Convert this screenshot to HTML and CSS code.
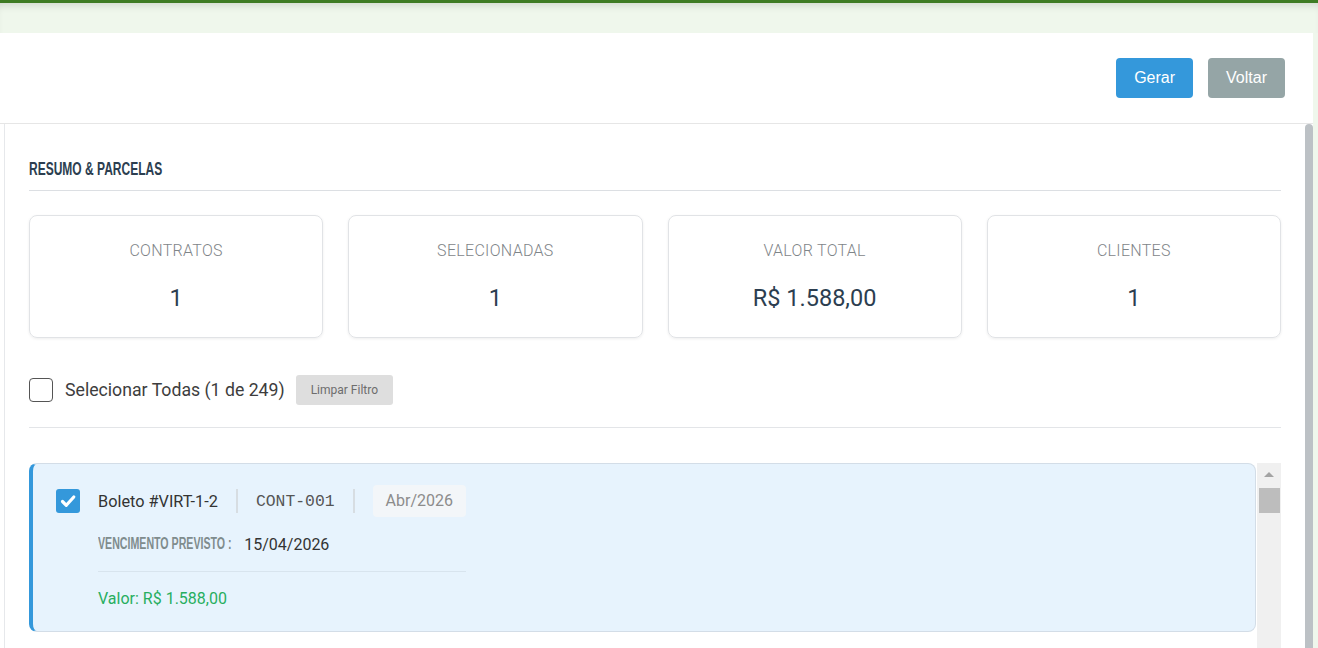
FILE: index.html
```html
<!DOCTYPE html>
<html lang="pt-BR">

<head>
    <meta charset="UTF-8">
    <meta name="viewport" content="width=device-width, initial-scale=1.0">
    <title>Gerar Boletos</title>
    <link rel="stylesheet" href="styles.css">
</head>

<body>
    <div class="topbar"></div>

    <div class="panel">
        <div class="panel-header">
            <button class="btn btn-primary">Gerar</button>
            <button class="btn btn-secondary">Voltar</button>
        </div>

        <div class="panel-body">
            <div class="content">
                <h3 class="section-title"><span>Resumo &amp; Parcelas</span></h3>

                <div class="summary">
                    <div class="summary-card">
                        <div class="summary-label">Contratos</div>
                        <div class="summary-value">1</div>
                    </div>
                    <div class="summary-card">
                        <div class="summary-label">Selecionadas</div>
                        <div class="summary-value">1</div>
                    </div>
                    <div class="summary-card">
                        <div class="summary-label">Valor Total</div>
                        <div class="summary-value">R$ 1.588,00</div>
                    </div>
                    <div class="summary-card">
                        <div class="summary-label">Clientes</div>
                        <div class="summary-value">1</div>
                    </div>
                </div>

                <div class="select-row">
                    <span class="checkbox"></span>
                    <span class="select-text">Selecionar Todas (1 de 249)</span>
                    <button class="btn-filter">Limpar Filtro</button>
                </div>

                <div class="parcel-list">
                    <div class="parcel-items">
                        <div class="parcel selected">
                            <span class="checkbox checked">
                                <svg viewBox="0 0 24 24" width="24" height="24">
                                    <path d="M6.5 12.5l3.8 3.8 7.5-8.3" fill="none" stroke="#fff" stroke-width="3.2" stroke-linecap="round" stroke-linejoin="round" />
                                </svg>
                            </span>
                            <div class="parcel-body">
                                <div class="parcel-head">
                                    <span class="parcel-name">Boleto #VIRT-1-2</span>
                                    <span class="sep"></span>
                                    <span class="parcel-contract">CONT-001</span>
                                    <span class="sep"></span>
                                    <span class="parcel-tag">Abr/2026</span>
                                </div>
                                <div class="parcel-due">
                                    <span class="due-label">Vencimento previsto :</span>
                                    <span class="due-date">15/04/2026</span>
                                </div>
                                <div class="parcel-value">Valor: R$ 1.588,00</div>
                            </div>
                        </div>
                    </div>
                    <!-- barra de rolagem da lista -->
                    <div class="list-scrollbar">
                        <div class="list-arrow"><span></span></div>
                        <div class="list-thumb"></div>
                    </div>
                </div>
            </div>
            <div class="scrollbar"><div class="scrollbar-thumb"></div></div>
        </div>
    </div>
</body>

</html>
```

FILE: styles.css
```css
html,
body {
    margin: 0;
    height: 100%;
    overflow: hidden;
}

body {
    font-family: Roboto, 'Liberation Sans', sans-serif;
    background-color: #eff7ec;
    color: #333;
}

.topbar {
    height: 30px;
    border-top: 3px solid #3e7b24;
    box-shadow: inset 0 7px 8px -5px rgba(0, 0, 0, 0.14);
}

.panel {
    width: calc(100% - 5px);
    background-color: white;
}

.panel-header {
    height: 90px;
    display: flex;
    justify-content: flex-end;
    align-items: center;
    gap: 15px;
    padding-right: 28px;
    border-bottom: 1px solid #e6e6e6;
}

.btn {
    height: 40px;
    padding: 0 18px;
    border: none;
    border-radius: 4px;
    font-family: 'Liberation Sans', Arial, sans-serif;
    font-size: 16px;
    color: white;
    cursor: pointer;
}

.btn-primary {
    background-color: #3498db;
}

.btn-secondary {
    background-color: #95a5a6;
}

.panel-body {
    display: flex;
    height: 700px;
    margin-left: 4px;
    border-left: 1px solid #e6e8eb;
}

.content {
    flex: 1;
    min-width: 0;
    padding: 30px 24px 30px 24px;
    overflow: hidden;
}

.scrollbar {
    width: 8px;
}

.scrollbar-thumb {
    height: 100%;
    border-radius: 4px;
    background-color: #bcc1c5;
}

.section-title {
    margin: 0;
    height: 30px;
    line-height: 30px;
    padding-bottom: 6px;
    border-bottom: 1px solid #dcdfe3;
    font-family: 'Liberation Sans', Arial, sans-serif;
    font-weight: bold;
    font-size: 19px;
    text-transform: uppercase;
    color: #2c3e50;
}

.section-title span {
    display: inline-block;
    transform: scaleX(0.632);
    transform-origin: left center;
}

.summary {
    display: grid;
    grid-template-columns: repeat(4, 1fr);
    gap: 25px;
    margin-top: 24px;
}

.summary-card {
    border: 1px solid #e1e3e6;
    border-radius: 8px;
    box-shadow: 0 1px 3px rgba(0, 0, 0, 0.07);
    padding: 25px 10px 24px;
    text-align: center;
}

.summary-label {
    font-size: 16px;
    font-weight: 300;
    line-height: 20px;
    letter-spacing: 0.3px;
    text-transform: uppercase;
    color: #7f8589;
}

.summary-value {
    margin-top: 22px;
    font-size: 23.5px;
    line-height: 30px;
    color: #2c3e50;
}

.select-row {
    display: flex;
    align-items: center;
    height: 30px;
    margin-top: 37px;
    padding-bottom: 22px;
    border-bottom: 1px solid #e3e5e8;
}

.checkbox {
    width: 24px;
    height: 24px;
    box-sizing: border-box;
    border: 1.5px solid #555;
    border-radius: 4px;
    flex-shrink: 0;
}

.checkbox.checked {
    border: none;
    border-radius: 3px;
    background-color: #3498db;
}

.checkbox svg {
    display: block;
}

.select-text {
    margin-left: 12px;
    font-size: 17.7px;
    color: #3d3d3d;
}

.btn-filter {
    margin-left: 11px;
    height: 30px;
    padding: 0 15px;
    border: none;
    border-radius: 3px;
    background-color: #dedede;
    font-family: Roboto, sans-serif;
    font-size: 12px;
    color: #6d6d6d;
}

.parcel-list {
    display: flex;
    margin-top: 35px;
    height: 240px;
    overflow: hidden;
}

.parcel-items {
    flex: 1;
    min-width: 0;
}

.list-scrollbar {
    width: 24px;
    margin-left: 1px;
    background-color: #f0f0f0;
}

.list-arrow {
    height: 25px;
    display: flex;
    justify-content: center;
    align-items: center;
}

.list-arrow span {
    border-left: 5px solid transparent;
    border-right: 5px solid transparent;
    border-bottom: 5px solid #a3a3a3;
    margin-bottom: 3px;
}

.list-thumb {
    height: 25px;
    margin: 0 1px 0 2px;
    background-color: #bdbdbd;
}

.parcel {
    display: flex;
    gap: 18px;
    padding: 21px 20px 21px 23px;
    margin-bottom: 16px;
    border: 1px solid #dde3ea;
    border-left: 4px solid #dde3ea;
    border-radius: 8px;
    background-color: white;
}

.parcel.selected {
    background-color: #e7f3fd;
    border-color: #d3dde7;
    border-left-color: #3498db;
}

.parcel .checkbox {
    margin-top: 4px;
}

.parcel-head {
    display: flex;
    align-items: center;
    gap: 18px;
    height: 32px;
}

.parcel-name {
    font-size: 16.3px;
    color: #333;
}

.sep {
    width: 2px;
    height: 24px;
    background-color: #d7dde2;
}

.parcel-contract {
    font-family: 'Liberation Mono', 'Courier New', monospace;
    font-size: 16.4px;
    color: #555;
}

.parcel-tag {
    height: 32px;
    line-height: 32px;
    padding: 0 13px;
    border-radius: 4px;
    background-color: #f3f6f9;
    font-size: 16px;
    color: #8c8c8c;
}

.parcel-due {
    display: flex;
    align-items: center;
    gap: 13px;
    height: 22px;
    margin-top: 16px;
    padding-bottom: 16px;
    border-bottom: 1px solid #d8e4ee;
}

.due-label {
    display: inline-block;
    margin-right: -68px;
    font-family: 'Liberation Sans', Arial, sans-serif;
    font-weight: bold;
    font-size: 16px;
    text-transform: uppercase;
    color: #7f8c8d;
    white-space: nowrap;
    transform: scaleX(0.664);
    transform-origin: left center;
}

.due-date {
    font-size: 16px;
    color: #333;
}

.parcel-value {
    margin-top: 16px;
    line-height: 22px;
    font-size: 16px;
    color: #27ae60;
}
```
